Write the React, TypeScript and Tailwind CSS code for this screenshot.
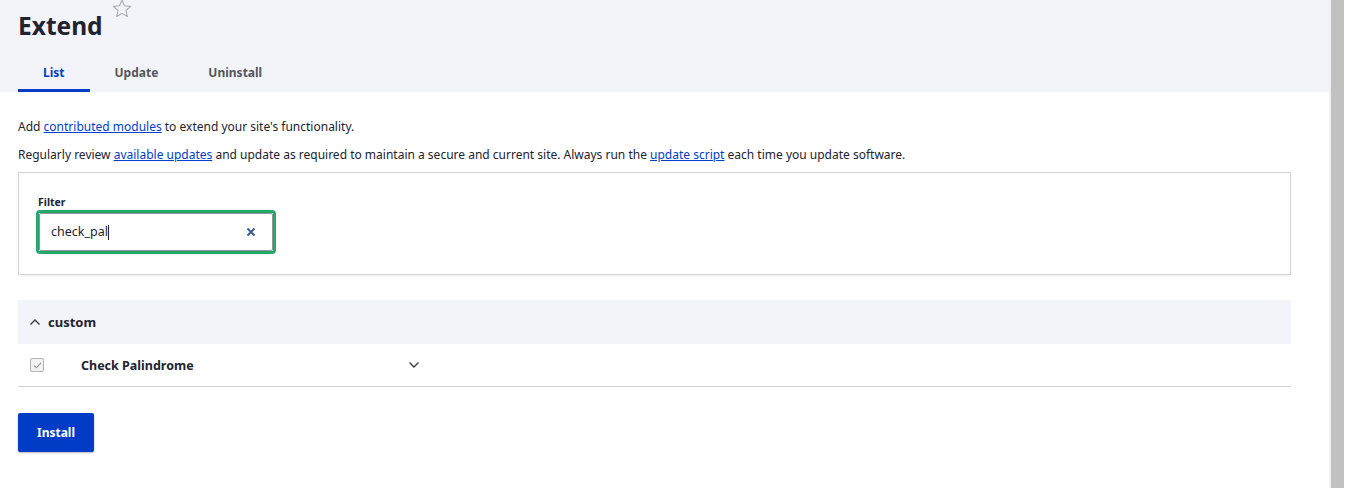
import { useState } from "react";

const font = { fontFamily: '"Segoe UI", "Noto Sans", "Open Sans", sans-serif' };

function Star() {
  return (
    <svg width="20" height="19" viewBox="0 0 20 19" className="mt-[-1px]">
      <path
        d="M10 1.2l2.5 5.6 6.1.6-4.6 4.1 1.3 6-5.3-3.1-5.3 3.1 1.3-6L1.4 7.4l6.1-.6z"
        fill="none"
        stroke="#a9a9ae"
        strokeWidth="1.1"
        strokeLinejoin="round"
      />
    </svg>
  );
}

function Chevron({ up }: { up?: boolean }) {
  return (
    <svg width="12" height="8" viewBox="0 0 12 8">
      <path
        d={up ? "M1.5 6.5L6 2l4.5 4.5" : "M1.5 1.5L6 6l4.5-4.5"}
        fill="none"
        stroke="#3b3c40"
        strokeWidth="1.4"
      />
    </svg>
  );
}

export default function App() {
  const [value, setValue] = useState("check_pal");
  const tabs = ["List", "Update", "Uninstall"];

  return (
    <div className="flex h-[488px] w-[1345px] overflow-hidden bg-white" style={font}>
      <div className="w-[1329px] shrink-0">
        {/* Header */}
        <div className="h-[92px] bg-[#f3f4f9] pl-[18px]">
          <div className="flex items-start gap-[9px]">
            <h1 className="mt-[10px] text-[24.5px] font-bold leading-[32px] text-[#222330]">Extend</h1>
            <Star />
          </div>
          <div className="mt-[18px] flex">
            {tabs.map((t, i) => (
              <div
                key={t}
                className={`flex h-[32px] items-start justify-center px-[25px] pt-[4px] text-[12px] font-bold ${
                  i === 0 ? "border-b-[3px] border-[#003cc5] text-[#003cc5]" : "text-[#55565b]"
                }`}
              >
                {t}
              </div>
            ))}
          </div>
        </div>

        {/* Body */}
        <div className="pl-[18px] pr-[38px] text-[12px] text-[#222330]">
          <p className="mt-[27px] leading-[16px]">
            Add <a className="text-[#003ecc] underline">contributed modules</a> to extend your site's functionality.
          </p>
          <p className="mt-[12px] leading-[16px]">
            Regularly review <a className="text-[#003ecc] underline">available updates</a> and update as required to
            maintain a secure and current site. Always run the{" "}
            <a className="text-[#003ecc] underline">update script</a> each time you update software.
          </p>

          <div className="mt-[9px] h-[103px] border border-[#d4d4d8] pl-[17px] pt-[22px] shadow-[0_1px_3px_rgba(0,0,0,0.06)]">
            <label className="ml-[2px] block text-[10.5px] font-bold leading-[14px] text-[#222330]">Filter</label>
            <div className="mt-[1px] w-[240px] rounded-[4px] border-[3px] border-[#26a769] p-0">
              <div className="flex h-[38px] items-center rounded-[2px] border border-[#8e929c] bg-white pl-[11px] pr-[16px]">
                <div className="flex w-full items-center">
                  <input
                    value={value}
                    onChange={(e) => setValue(e.target.value)}
                    className="w-[57px] bg-transparent text-[12.5px] text-[#222330] outline-none"
                    style={font}
                  />
                  <span className="h-[15px] w-px bg-[#222330]" />
                </div>
                <svg width="10" height="10" viewBox="0 0 10 10" className="shrink-0">
                  <path d="M1.5 1.5l7 7M8.5 1.5l-7 7" stroke="#3e5c96" strokeWidth="2" />
                </svg>
              </div>
            </div>
          </div>

          {/* Custom group */}
          <div className="mt-[25px] flex h-[44px] items-center gap-[7px] bg-[#f3f4f9] pl-[11px]">
            <Chevron up />
            <span className="mt-[1px] text-[13px] font-bold text-[#222330]">custom</span>
          </div>
          <div className="flex h-[43px] items-center border-b border-[#d3d4d9]">
            <div className="ml-[12px] flex h-[14px] w-[14px] items-center justify-center rounded-[2px] border border-[#b4b4b8] bg-[#f2f2f2]">
              <svg width="9" height="7" viewBox="0 0 9 7">
                <path d="M1 3.5l2.3 2.3L8 1" fill="none" stroke="#9a9a9e" strokeWidth="1.1" />
              </svg>
            </div>
            <span className="ml-[37px] mt-[2px] w-[327px] text-[12.5px] font-bold text-[#222330]">Check Palindrome</span>
            <Chevron />
          </div>

          <button className="mt-[26px] h-[39px] w-[76px] rounded-[2px] bg-[#003cc5] text-[12px] font-bold text-white shadow-[0_1px_2px_rgba(0,0,0,0.3)]">
            Install
          </button>
        </div>
      </div>
      <div className="flex shrink-0">
        <div className="w-[2px] bg-[#f0f0f0]" />
        <div className="w-[13px] bg-[#c1c1c1]" />
        <div className="w-[1px] bg-white" />
      </div>
    </div>
  );
}
